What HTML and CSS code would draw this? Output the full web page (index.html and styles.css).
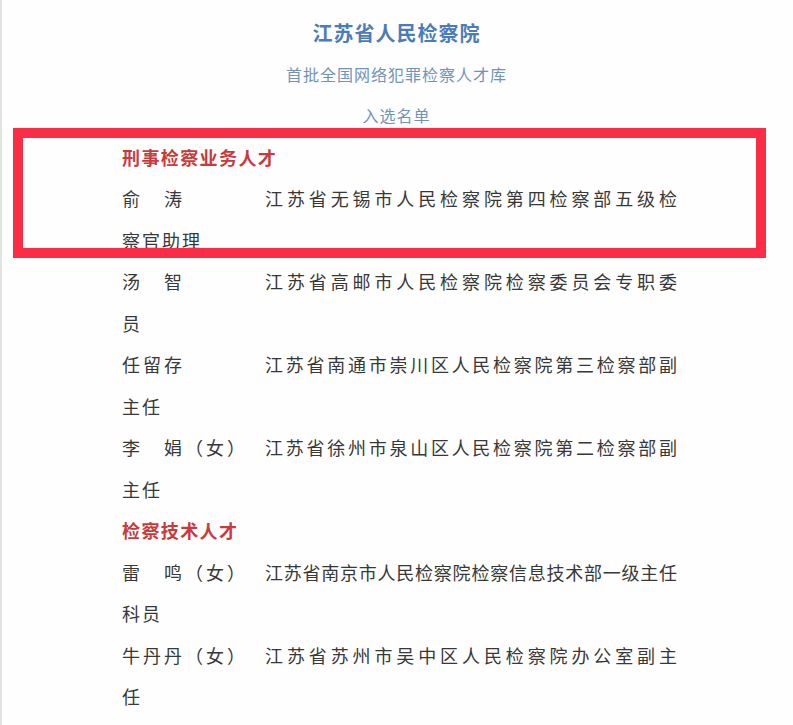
FILE: index.html
```html
<!DOCTYPE html>
<html lang="zh-CN">
<head>
<meta charset="utf-8">
<link rel="stylesheet" href="styles.css">
</head>
<body>
<div class="edge"></div>
<main class="page">
  <header class="head">
    <div class="title">江苏省人民检察院</div>
    <div class="sub">首批全国网络犯罪检察人才库</div>
    <div class="sub">入选名单</div>
  </header>
  <section class="list">
    <div class="cat">刑事检察业务人才</div>
    <div class="row"><span class="name">俞　涛</span><span class="org">江苏省无锡市人民检察院第四检察部五级检</span></div>
    <div class="cont">察官助理</div>
    <div class="row"><span class="name">汤　智</span><span class="org">江苏省高邮市人民检察院检察委员会专职委</span></div>
    <div class="cont">员</div>
    <div class="row"><span class="name">任留存</span><span class="org">江苏省南通市崇川区人民检察院第三检察部副</span></div>
    <div class="cont">主任</div>
    <div class="row"><span class="name">李　娟（女）</span><span class="org">江苏省徐州市泉山区人民检察院第二检察部副</span></div>
    <div class="cont">主任</div>
    <div class="cat">检察技术人才</div>
    <div class="row"><span class="name">雷　鸣（女）</span><span class="org">江苏省南京市人民检察院检察信息技术部一级主任</span></div>
    <div class="cont">科员</div>
    <div class="row"><span class="name">牛丹丹（女）</span><span class="org">江苏省苏州市吴中区人民检察院办公室副主</span></div>
    <div class="cont">任</div>
  </section>
  <div class="mark"></div>
</main>
</body>
</html>
```
FILE: styles.css
```css
html, body {
  margin: 0;
  padding: 0;
  background: #fefefe;
}
body {
  width: 793px;
  height: 725px;
  overflow: hidden;
  position: relative;
  font-family: "Noto Sans CJK SC", "Noto Sans", sans-serif;
}
.edge {
  position: absolute;
  left: 0;
  top: 0;
  width: 2px;
  height: 725px;
  background: #e3e3e3;
}
.page {
  padding-top: 12px;
}
.head {
  display: flex;
  flex-direction: column;
  align-items: center;
  line-height: 41.5px;
}
.title {
  font-size: 20px;
  font-weight: 700;
  color: #4b7cb9;
  letter-spacing: 1px;
}
.sub {
  font-size: 16px;
  color: #7193bb;
  letter-spacing: 1px;
}
.list {
  padding-left: 122px;
  width: 555px;
  line-height: 41.5px;
  font-size: 18px;
  color: #383838;
}
.cat {
  color: #c93a3d;
  font-weight: 700;
  letter-spacing: 1.4px;
}
.row {
  display: flex;
}
.name {
  width: 143px;
  flex: none;
  letter-spacing: 3px;
  white-space: nowrap;
}
.org {
  flex: 1;
  text-align: justify;
  text-align-last: justify;
  white-space: nowrap;
}
.cont {
  letter-spacing: 2px;
}
.mark {
  position: absolute;
  left: 13px;
  top: 128px;
  width: 753px;
  height: 130px;
  box-sizing: border-box;
  border: 10.5px solid #fb2d46;
}
```
